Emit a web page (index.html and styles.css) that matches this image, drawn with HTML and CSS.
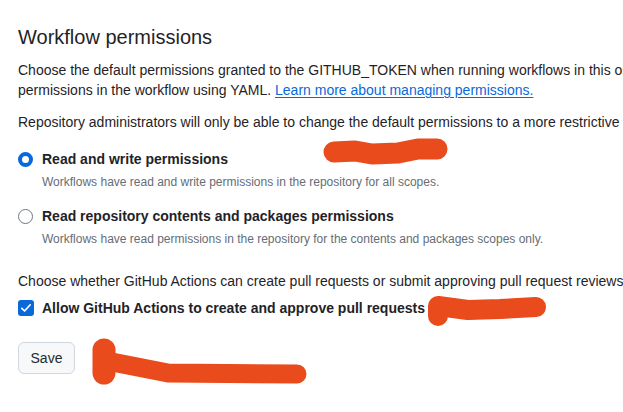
FILE: index.html
```html
<!DOCTYPE html>
<html>
<head>
<meta charset="utf-8">
<link rel="stylesheet" href="styles.css">
</head>
<body>
<div class="page">
  <h2 class="heading">Workflow permissions</h2>
  <p class="text">Choose the default permissions granted to the GITHUB_TOKEN when running workflows in this organization. You can specify more granular<br>permissions in the workflow using YAML. <a class="link" href="#">Learn more about managing permissions.</a></p>
  <p class="text note">Repository administrators will only be able to change the default permissions to a more restrictive setting.</p>

  <div class="options">
    <div class="option">
      <span class="radio checked"></span>
      <div class="option-body">
        <div class="label">Read and write permissions</div>
        <div class="desc">Workflows have read and write permissions in the repository for all scopes.</div>
      </div>
    </div>
    <div class="option">
      <span class="radio"></span>
      <div class="option-body">
        <div class="label">Read repository contents and packages permissions</div>
        <div class="desc">Workflows have read permissions in the repository for the contents and packages scopes only.</div>
      </div>
    </div>
  </div>

  <p class="text choose">Choose whether GitHub Actions can create pull requests or submit approving pull request reviews.</p>
  <div class="check-row">
    <span class="checkbox"><svg width="12" height="12" viewBox="0 0 12 12"><path d="M1.8 6.3 L4.6 9 L10.2 2.8" fill="none" stroke="#ffffff" stroke-width="1.7" stroke-linecap="round" stroke-linejoin="round"/></svg></span>
    <span class="label">Allow GitHub Actions to create and approve pull requests</span>
  </div>

  <button class="btn">Save</button>
</div>

<svg class="scribbles" width="623" height="412" viewBox="0 0 623 412">
  <g fill="none" stroke="#e94b1c" stroke-linecap="round" stroke-linejoin="round">
    <path d="M334 152 L355 151 L372 154 L398 153 L418 149 L437 149" stroke-width="21"/>
    <path d="M438 316 L438 306 L468 310 L500 309 L536 307" stroke-width="20"/>
    <path d="M104 350 L104 373" stroke-width="23"/>
    <path d="M112 362 L168 373 L297 374" stroke-width="19"/>
  </g>
</svg>
</body>
</html>
```
FILE: styles.css
```css
html, body {
  margin: 0;
  padding: 0;
  overflow: hidden;
  background: #ffffff;
}
body {
  font-family: "Liberation Sans", Arial, sans-serif;
  color: #1f2328;
  width: 623px;
  height: 412px;
  position: relative;
}
.page {
  padding: 25px 0 0 18px;
  width: 1000px;
}
.heading {
  margin: 0;
  font-size: 20px;
  line-height: 24px;
  font-weight: 400;
}
.text {
  margin: 11px 0 0 0;
  font-size: 14px;
  line-height: 20px;
  white-space: nowrap;
}
.note {
  margin-top: 12px;
}
.link {
  color: #0969da;
  text-decoration: underline;
  text-underline-offset: 2px;
}
.options {
  margin-top: 17px;
  display: flex;
  flex-direction: column;
  gap: 15px;
}
.option {
  display: flex;
  align-items: flex-start;
  gap: 9px;
}
.radio {
  box-sizing: border-box;
  width: 15px;
  height: 15px;
  border-radius: 50%;
  border: 1px solid #6e7781;
  background: #ffffff;
  margin-top: 3px;
  flex: none;
}
.radio.checked {
  border: 4.5px solid #0969da;
}
.label {
  font-size: 14px;
  line-height: 20px;
  font-weight: 700;
}
.desc {
  margin-top: 4px;
  font-size: 12px;
  line-height: 18px;
  color: #656d76;
}
.choose {
  margin-top: 23px;
}
.check-row {
  margin-top: 7px;
  display: flex;
  align-items: flex-start;
  gap: 8px;
}
.checkbox {
  box-sizing: border-box;
  width: 16px;
  height: 16px;
  border-radius: 3px;
  background: #0969da;
  margin-top: 2px;
  display: flex;
  align-items: center;
  justify-content: center;
  flex: none;
}
.btn {
  display: block;
  margin-top: 24px;
  width: 57px;
  height: 32px;
  box-sizing: border-box;
  background: #f6f8fa;
  border: 1px solid #d0d7de;
  border-radius: 6px;
  font-family: "Liberation Sans", Arial, sans-serif;
  font-size: 14px;
  color: #24292f;
  padding: 0;
}
.scribbles {
  position: absolute;
  left: 0;
  top: 0;
  pointer-events: none;
}
```
